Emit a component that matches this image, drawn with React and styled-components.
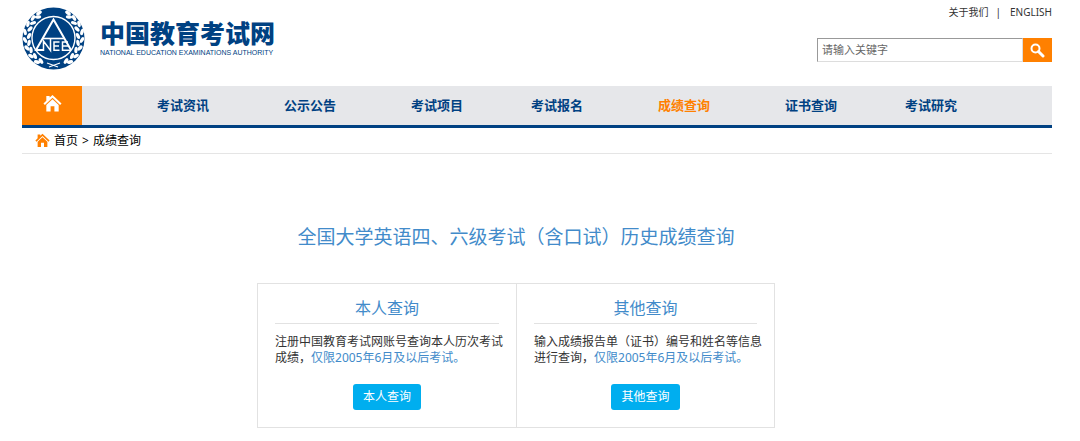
import React from 'react'
import styled, { createGlobalStyle } from 'styled-components'

const GlobalStyle = createGlobalStyle`
  * {
    box-sizing: border-box;
  }
  body {
    margin: 0;
    background: #fff;
    color: #333;
    font-family: "Noto Sans", "Noto Sans CJK SC", sans-serif;
    font-size: 12px;
    line-height: 16px;
  }
  h1, h2, p, ul {
    margin: 0;
    padding: 0;
    font-weight: normal;
  }
  a {
    color: inherit;
    text-decoration: none;
  }
`;

const Page = styled.div`
  padding: 0 28px 0 22px;
`;

const Header = styled.header`
  display: flex;
  justify-content: space-between;
  height: 86px;
`;

const Brand = styled.a`
  display: flex;
  align-items: flex-start;
  gap: 15px;
  padding-top: 7px;
  color: #004182;
`;

const BrandText = styled.div`
  padding-top: 12px;
`;

const BrandName = styled.div`
  font-size: 25px;
  font-weight: 900;
  line-height: 28px;
`;

const BrandSub = styled.div`
  font-family: "Liberation Sans", sans-serif;
  font-size: 7px;
  line-height: 12px;
  white-space: nowrap;
`;

const HeaderRight = styled.div`
  display: flex;
  flex-direction: column;
  align-items: flex-end;
  gap: 18px;
  padding-top: 4px;
`;

const TopLinks = styled.div`
  display: flex;
  gap: 7px;
  font-size: 10px;
`;

const EnglishLink = styled.a`
  margin-left: 2px;
`;

const Search = styled.form`
  display: flex;
  height: 24px;
`;

const SearchInput = styled.input`
  width: 206px;
  padding: 0 4px;
  border: 1px solid #ddd;
  border-top-color: #999;
  border-left-color: #999;
  border-radius: 0;
  font: inherit;
  font-size: 11px;
  outline: none;

  &::placeholder {
    color: #666;
    opacity: 1;
  }
`;

const SearchButton = styled.button`
  display: flex;
  align-items: center;
  justify-content: center;
  width: 29px;
  padding: 0;
  border: none;
  background: #ff8000;
  cursor: pointer;
`;

const Nav = styled.nav`
  display: flex;
  height: 42px;
  background: #e6e7ea;
  border-bottom: 3px solid #004182;
`;

const HomeLink = styled.a`
  display: flex;
  align-items: center;
  justify-content: center;
  width: 60px;
  padding-bottom: 4px;
  background: #ff8000;
`;

const NavList = styled.ul`
  flex: 1;
  display: grid;
  grid-template-columns: 127fr 127fr 120fr 127fr 127fr 120fr 147fr;
  align-items: center;
  padding-left: 75px;
  list-style: none;
`;

const NavLink = styled.a`
  color: ${({ $active }) => ($active ? '#ff8000' : '#004182')};
  font-size: 13px;
  font-weight: bold;
  white-space: nowrap;
`;

const Breadcrumb = styled.div`
  display: flex;
  align-items: center;
  gap: 4px;
  height: 26px;
  padding-left: 13px;
  border-bottom: 1px solid #e5e5e5;
  color: #000;
`;

const Main = styled.main`
  display: flex;
  flex-direction: column;
  align-items: center;
  padding: 70px 42px 0 0;
`;

const Title = styled.h1`
  color: #428bca;
  font-size: 19px;
  line-height: 26px;
`;

const Cards = styled.div`
  display: grid;
  grid-template-columns: 1fr 1fr;
  width: 518px;
  max-width: 100%;
  margin: 33px 0 12px;
  border: 1px solid #e2e2e2;
`;

const Card = styled.section`
  padding: 12px 12px 17px 17px;
  text-align: center;

  & + & {
    border-left: 1px solid #e2e2e2;
  }
`;

const CardTitle = styled.h2`
  margin-right: 5px;
  padding-bottom: 3px;
  border-bottom: 1px solid #e2e2e2;
  color: #428bca;
  font-size: 16px;
  line-height: 24px;
`;

const CardText = styled.p`
  margin: 10px 0 18px;
  text-align: left;
`;

const Note = styled.span`
  color: #428bca;
`;

const CardButton = styled.button`
  height: 26px;
  margin-right: 5px;
  padding: 0 10px;
  border: none;
  border-radius: 3px;
  background: #00aeef;
  color: #fff;
  font: inherit;
  vertical-align: top;
  cursor: pointer;
`;

const navItems = ['考试资讯', '公示公告', '考试项目', '考试报名', '成绩查询', '证书查询', '考试研究'];

const cards = [
  {
    title: '本人查询',
    text: '注册中国教育考试网账号查询本人历次考试成绩，',
  },
  {
    title: '其他查询',
    text: '输入成绩报告单（证书）编号和姓名等信息进行查询，',
  },
];

// [x, y, angle] of each leaf on the left branch
const leaves = [
  [17, 6, 55], [16, 10, 85], [11, 11, 30], [11, 16, 70], [6, 17, 10], [8, 22, 45],
  [3, 25, -15], [7, 29, 25], [3, 33, -30], [7, 36, 10], [5, 41, -45], [9, 43, -5],
  [9, 49, -60], [13, 49, -20], [15, 55, -75], [19, 54, -35],
];

const Branch = () => (
  <g fill="#fff">
    {leaves.map(([x, y, a]) => (
      <ellipse key={`${x}-${y}`} cx={x} cy={y} rx="1.7" ry="3.2" transform={`rotate(${a} ${x} ${y})`} />
    ))}
    <path d="M25 56 36 60" stroke="#fff" strokeWidth="1.2" />
  </g>
)

const Emblem = () => (
  <svg width="63" height="63" viewBox="0 0 63 63" aria-hidden="true">
    <circle cx="31.5" cy="31.5" r="31" fill="#004182" />
    <Branch />
    <g transform="translate(63 0) scale(-1 1)"><Branch /></g>
    <circle cx="31.5" cy="31" r="21.5" fill="#004182" stroke="#fff" strokeWidth="1.4" />
    <g fill="none" stroke="#fff">
      <path d="M21 43H14L31.5 12.5 49 43" strokeWidth="2" />
      <path d="M21 31.5H42" strokeWidth="1.6" />
      <path d="M21.5 44V34L28.5 43.5V32M37.5 35H32V43.3H37.5M32 39H37M46 35H40.5V43.3H49M40.5 39H46" strokeWidth="1.5" />
    </g>
  </svg>
)

const HouseIcon = ({ size, color }) => (
  <svg width={size} height={size} viewBox="0 0 20 20" fill={color} aria-hidden="true">
    <path d="M10 1 7 3.8V2H3.5V7.1L0.5 10 2 11.5 10 4 18 11.5 19.5 10Z" />
    <path d="M10 5.5 3.5 11.5V18.5H8V13H12V18.5H16.5V11.5Z" />
  </svg>
)

const SearchIcon = () => (
  <svg width="15" height="15" viewBox="0 0 15 15" fill="none" stroke="#fff" aria-hidden="true">
    <circle cx="5.5" cy="5.5" r="4" strokeWidth="2" />
    <path d="M8.5 8.5 13 13" strokeWidth="3" strokeLinecap="round" />
  </svg>
)

const App = () => {
  return (
    <>
      <GlobalStyle />
      <Page>
        <Header>
          <Brand href="#">
            <Emblem />
            <BrandText>
              <BrandName>中国教育考试网</BrandName>
              <BrandSub>NATIONAL EDUCATION EXAMINATIONS AUTHORITY</BrandSub>
            </BrandText>
          </Brand>
          <HeaderRight>
            <TopLinks>
              <a href="#about">关于我们</a>
              <span>|</span>
              <EnglishLink href="#english">ENGLISH</EnglishLink>
            </TopLinks>
            <Search>
              <SearchInput type="text" placeholder="请输入关键字" aria-label="请输入关键字" />
              <SearchButton type="button" aria-label="搜索">
                <SearchIcon />
              </SearchButton>
            </Search>
          </HeaderRight>
        </Header>
        <Nav>
          <HomeLink href="#" aria-label="首页">
            <HouseIcon size={19} color="#fff" />
          </HomeLink>
          <NavList>
            {navItems.map((item) => (
              <li key={item}>
                <NavLink href="#" $active={item === '成绩查询'}>{item}</NavLink>
              </li>
            ))}
          </NavList>
        </Nav>
        <Breadcrumb>
          <HouseIcon size={15} color="#ff8000" />
          <a href="#">首页</a>
          <span>&gt;</span>
          <a href="#">成绩查询</a>
        </Breadcrumb>
        <Main>
          <Title>全国大学英语四、六级考试（含口试）历史成绩查询</Title>
          <Cards>
            {cards.map(({ title, text }) => (
              <Card key={title}>
                <CardTitle>{title}</CardTitle>
                <CardText>
                  {text}<Note>仅限2005年6月及以后考试。</Note>
                </CardText>
                <CardButton type="button">{title}</CardButton>
              </Card>
            ))}
          </Cards>
        </Main>
      </Page>
    </>
  )
}

export default App
